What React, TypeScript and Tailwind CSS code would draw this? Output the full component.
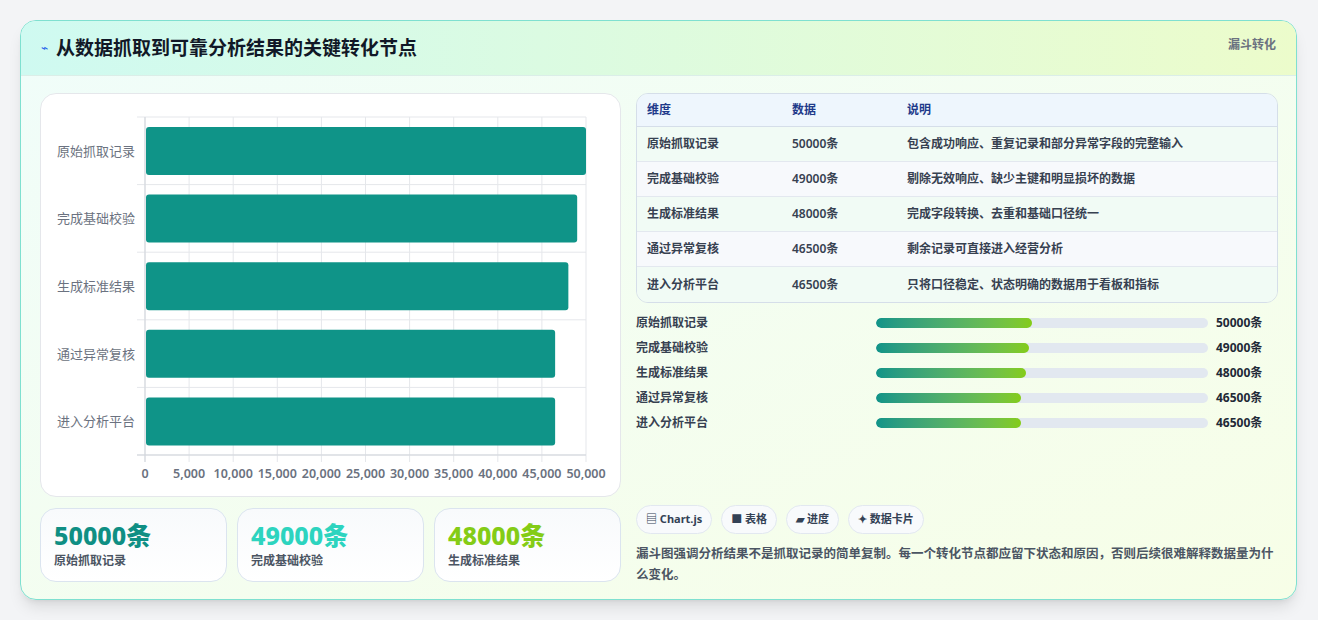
import React from 'react'

const rows = [
  { name: '原始抓取记录', value: 50000, desc: '包含成功响应、重复记录和部分异常字段的完整输入' },
  { name: '完成基础校验', value: 49000, desc: '剔除无效响应、缺少主键和明显损坏的数据' },
  { name: '生成标准结果', value: 48000, desc: '完成字段转换、去重和基础口径统一' },
  { name: '通过异常复核', value: 46500, desc: '剩余记录可直接进入经营分析' },
  { name: '进入分析平台', value: 46500, desc: '只将口径稳定、状态明确的数据用于看板和指标' },
]

function BarChart() {
  const x0 = 104, x1 = 545, top = 23, bottom = 361
  const rh = (bottom - top) / rows.length
  const ticks = Array.from({ length: 11 }, (_, i) => i * 5000)
  const sx = (v: number) => x0 + (v / 50000) * (x1 - x0)
  return (
    <svg width="580" height="401" className="block">
      {ticks.map(t => (
        <line key={t} x1={sx(t)} x2={sx(t)} y1={top} y2={bottom + 7} stroke="#e5e7eb" />
      ))}
      {rows.map((_, i) => (
        <line key={i} x1={x0 - 8} x2={x1} y1={top + rh * (i + 1)} y2={top + rh * (i + 1)} stroke="#e5e7eb" />
      ))}
      <line x1={x0 - 8} x2={x1} y1={top} y2={top} stroke="#e5e7eb" />
      <line x1={x0} x2={x0} y1={top} y2={bottom + 7} stroke="#d1d5db" />
      <line x1={x0 - 8} x2={x1} y1={bottom} y2={bottom} stroke="#d1d5db" />
      {rows.map((r, i) => (
        <g key={r.name}>
          <rect x={x0 + 1} y={top + rh * i + 10} width={sx(r.value) - x0 - 1} height={48} rx={3} fill="#0f9488" />
          <text x={x0 - 10} y={top + rh * i + rh / 2 + 5} textAnchor="end" fontSize="13" fill="#6b7280">{r.name}</text>
        </g>
      ))}
      {ticks.map(t => (
        <text key={t} x={sx(t)} y={384} textAnchor="middle" fontSize="12.5" fontWeight="600" fill="#6b7280">{t.toLocaleString('en-US')}</text>
      ))}
    </svg>
  )
}

export default function App() {
  const cards = [
    { v: '50000条', l: '原始抓取记录', c: 'text-[#0f8f84]' },
    { v: '49000条', l: '完成基础校验', c: 'text-[#2dd4bf]' },
    { v: '48000条', l: '生成标准结果', c: 'text-[#84cc16]' },
  ]
  return (
    <div className="w-[1318px] h-[620px] bg-[#f3f4f6] pt-5 px-5" style={{ fontFamily: '"Noto Sans", "Noto Sans CJK SC", sans-serif' }}>
      <div className="w-[1277px] h-[580px] rounded-2xl border border-[#7fe0d0] overflow-hidden bg-gradient-to-br from-[#f0fdfa] to-[#f7fee7] shadow-lg">
        {/* Header */}
        <div className="h-[55px] px-5 flex items-center justify-between bg-gradient-to-r from-[#cffaf1] to-[#ecfccb] border-b border-[#dbeee8]">
          <div className="flex items-center gap-2">
            <span className="text-[#2563eb] text-xs">⌁</span>
            <h1 className="text-[19px] font-bold text-[#111827]">从数据抓取到可靠分析结果的关键转化节点</h1>
          </div>
          <span className="text-xs font-bold text-[#6b7280] self-start mt-4">漏斗转化</span>
        </div>

        <div className="flex gap-[15px] pt-[17px] pl-[19px] pr-[18px]">
          {/* Left */}
          <div className="w-[581px] flex flex-col gap-[11px]">
            <div className="h-[404px] bg-white rounded-2xl border border-[#e5e7eb] overflow-hidden">
              <BarChart />
            </div>
            <div className="flex gap-[10px]">
              {cards.map(c => (
                <div key={c.l} className="flex-1 h-[74px] rounded-2xl border border-[#dbe4ef] bg-gradient-to-b from-[#f8fafc] to-white px-[13px] pt-[10px]">
                  <div className={`text-[25px] leading-[32px] font-extrabold ${c.c}`}>{c.v}</div>
                  <div className="text-xs font-semibold text-[#4b5563] mt-0.5">{c.l}</div>
                </div>
              ))}
            </div>
          </div>

          {/* Right */}
          <div className="flex-1 flex flex-col">
            <div className="rounded-xl border border-[#d5dee9] overflow-hidden">
              <div className="h-[33px] flex items-center bg-[#eef6fd] border-b border-[#d5dee9] text-xs font-bold text-[#1e3a8a]">
                <div className="w-[155px] pl-[10px]">维度</div>
                <div className="w-[115px]">数据</div>
                <div>说明</div>
              </div>
              {rows.map((r, i) => (
                <div key={r.name} className={`h-[35px] flex items-center text-xs font-semibold text-[#374151] ${i < 4 ? 'border-b border-[#e3e8ef]' : ''} ${i % 2 ? 'bg-[#f7f9fc]' : 'bg-[#f1fbf5]'}`}>
                  <div className="w-[155px] pl-[10px]">{r.name}</div>
                  <div className="w-[115px]">{r.value}条</div>
                  <div>{r.desc}</div>
                </div>
              ))}
            </div>
            <div className="flex flex-col mt-[7px]">
              {rows.map(r => (
                <div key={r.name} className="h-[25px] flex items-center text-xs font-bold text-[#374151]">
                  <div className="w-[240px]">{r.name}</div>
                  <div className="w-[332px] h-[10px] rounded-full bg-[#e2e8f0] overflow-hidden">
                    <div className="h-full rounded-full bg-gradient-to-r from-[#0f9488] to-[#84cc16]" style={{ width: `${(r.value / 50000) * 47}%` }} />
                  </div>
                  <div className="ml-2 text-[#1f2937]">{r.value}条</div>
                </div>
              ))}
            </div>
            <div className="flex gap-[9px] mt-[70px]">
              {['▤ Chart.js', '■ 表格', '▰ 进度', '✦ 数据卡片'].map(t => (
                <span key={t} className="h-[29px] px-[9px] flex items-center rounded-full border border-[#e2e8f0] bg-[#f8fafc] text-[11px] font-bold text-[#334155]">{t}</span>
              ))}
            </div>
            <p className="mt-[9px] text-[12.5px] leading-[21px] font-semibold text-[#4b5563]">
              漏斗图强调分析结果不是抓取记录的简单复制。每一个转化节点都应留下状态和原因，否则后续很难解释数据量为什么变化。
            </p>
          </div>
        </div>
      </div>
    </div>
  )
}
